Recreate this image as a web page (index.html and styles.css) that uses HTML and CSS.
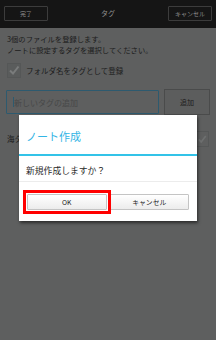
FILE: index.html
```html
<!DOCTYPE html>
<html lang="ja">
<head>
<meta charset="utf-8">
<link rel="stylesheet" href="styles.css">
</head>
<body>
<div class="screen">
  <header class="topbar">
    <div class="tbtn tbtn-done">完了</div>
    <div class="ttitle">タグ</div>
    <div class="tbtn tbtn-cancel">キャンセル</div>
  </header>
  <main class="content">
    <p class="info">3個のファイルを登録します。<br>ノートに設定するタグを選択してください。</p>
    <div class="checkrow">
      <span class="checkbox"><svg width="12" height="12" viewBox="0 0 12 12"><path d="M2 6.5 L5 9.5 L10.5 2.5" fill="none" stroke="#7a7c7c" stroke-width="2"/></svg></span>
      <span class="checklabel">フォルダ名をタグとして登録</span>
    </div>
    <div class="inputrow">
      <div class="input"><span class="caret"></span><span class="placeholder">新しいタグの追加</span></div>
      <div class="addbtn">追加</div>
    </div>
    <div class="tagrow">
      <span class="tagname">海タ</span>
      <span class="tagcheck"><svg width="10" height="10" viewBox="0 0 12 12"><path d="M2 6.5 L5 9.5 L10.5 2.5" fill="none" stroke="#6e7070" stroke-width="2"/></svg></span>
    </div>
  </main>
  <div class="dialog">
    <div class="dtitle">ノート作成</div>
    <div class="dline"></div>
    <div class="dmsg">新規作成しますか？</div>
    <div class="dsep"></div>
    <div class="dbtns">
      <div class="dbtn dbtn-ok">OK</div>
      <div class="dbtn">キャンセル</div>
    </div>
  </div>
</div>
</body>
</html>
```
FILE: styles.css
```css
html, body {
  margin: 0;
  padding: 0;
}
body {
  width: 216px;
  height: 340px;
  overflow: hidden;
  background: #5b5d5d;
  font-family: "Noto Sans CJK JP", "Noto Sans", sans-serif;
}
.screen {
  position: relative;
  width: 216px;
  height: 340px;
  background: #5b5d5d;
}
.topbar {
  height: 28px;
  background: #151515;
  display: flex;
  align-items: center;
  justify-content: space-between;
  padding: 0 4px;
  box-sizing: border-box;
}
.tbtn {
  height: 15px;
  border: 1px solid #3c3c3c;
  border-radius: 1px;
  box-sizing: border-box;
  display: flex;
  align-items: center;
  justify-content: center;
  color: #8e8e8e;
  font-size: 6px;
  margin-top: -2px;
}
.tbtn-done { width: 44px; }
.tbtn-cancel { width: 44px; }
.ttitle {
  color: #8e8e8e;
  font-size: 7px;
  margin-top: -2px;
}
.content {
  background: #5e5f5f;
  height: 312px;
  padding: 6px 6px 0 7px;
  box-sizing: border-box;
}
.info {
  margin: 0;
  font-size: 7.3px;
  line-height: 11px;
  color: #1c1c1c;
}
.checkrow {
  display: flex;
  align-items: center;
  margin-top: 6px;
  height: 16px;
}
.checkbox {
  width: 14px;
  height: 15px;
  border: 1px solid #555757;
  background: #5a5c5c;
  box-sizing: border-box;
  display: flex;
  align-items: center;
  justify-content: center;
}
.checklabel {
  margin-left: 5px;
  font-size: 7.5px;
  color: #1c1c1c;
}
.inputrow {
  display: flex;
  align-items: flex-end;
  margin-top: 10px;
  margin-left: -1px;
  gap: 5px;
  height: 26px;
}
.input {
  width: 153px;
  height: 24px;
  border: 1px solid #2d5a6f;
  border-radius: 1px;
  box-sizing: border-box;
  display: flex;
  align-items: center;
  padding-left: 6px;
}
.caret {
  width: 1px;
  height: 10px;
  background: #2d5a6f;
}
.placeholder {
  font-size: 8px;
  color: #474848;
}
.addbtn {
  width: 46px;
  height: 26px;
  margin-bottom: -1px;
  background: #5c5d5d;
  border: 1px solid #4a4b4b;
  box-sizing: border-box;
  display: flex;
  align-items: center;
  justify-content: center;
  font-size: 7px;
  color: #1c1c1c;
}
.tagrow {
  display: flex;
  align-items: center;
  justify-content: space-between;
  margin-top: 16px;
  height: 17px;
  padding-right: 1px;
}
.tagname {
  font-size: 7.5px;
  color: #1c1c1c;
}
.tagcheck {
  width: 14px;
  height: 16px;
  border: 1px solid #555757;
  box-sizing: border-box;
  display: flex;
  align-items: center;
  justify-content: center;
}
.dialog {
  position: absolute;
  left: 19px;
  top: 115px;
  width: 178px;
  height: 106px;
  background: #ffffff;
  box-shadow: 1px 2px 3px rgba(0,0,0,0.55);
  display: flex;
  flex-direction: column;
}
.dtitle {
  height: 39px;
  box-sizing: border-box;
  padding: 2px 0 0 7px;
  display: flex;
  align-items: center;
  font-size: 11px;
  color: #33b5e5;
}
.dline {
  height: 2px;
  background: #33c3e8;
}
.dmsg {
  height: 25px;
  box-sizing: border-box;
  padding: 3px 0 0 7px;
  display: flex;
  align-items: center;
  font-size: 8.8px;
  color: #2a2a2a;
}
.dsep {
  height: 1px;
  background: #ececec;
}
.dbtns {
  flex: 1;
  display: flex;
  align-items: center;
  padding: 0 8px;
  gap: 3px;
}
.dbtn {
  flex: 1;
  height: 16px;
  box-sizing: border-box;
  border: 1px solid #c4c4c4;
  border-radius: 1px;
  background: linear-gradient(#ffffff, #ececec);
  display: flex;
  align-items: center;
  justify-content: center;
  font-size: 6.8px;
  color: #222;
}
.dbtn-ok {
  position: relative;
}
.dbtn-ok::after {
  content: "";
  position: absolute;
  left: -5px;
  top: -5px;
  right: -5px;
  bottom: -5px;
  border: 3px solid #ff0000;
}
```
